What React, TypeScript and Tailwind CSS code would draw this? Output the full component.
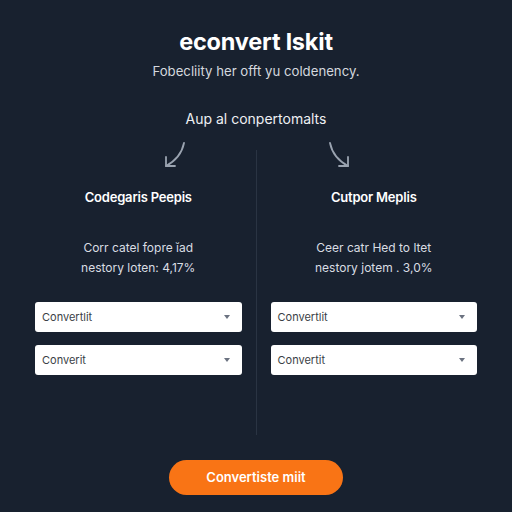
import React from 'react';

const Arrow: React.FC<{ flip?: boolean }> = ({ flip = false }) => (
  <svg
    width="24"
    height="28"
    viewBox="0 0 24 28"
    fill="none"
    className={flip ? '-scale-x-100' : ''}
  >
    <path d="M21 2 C19 12 14 19 3 25" stroke="#9aa3b0" strokeWidth="1.8" strokeLinecap="round" />
    <path d="M3 16 L3 25 L12 25" stroke="#9aa3b0" strokeWidth="1.8" strokeLinecap="round" strokeLinejoin="round" />
  </svg>
);

const Select: React.FC<{ label: string }> = ({ label }) => (
  <div className="h-[30px] bg-white rounded-[3px] flex items-center justify-between pl-[7px] pr-[12px] text-[11px] text-[#3b3f46]">
    <span>{label}</span>
    <span className="w-0 h-0 border-l-[3px] border-r-[3px] border-t-[4px] border-l-transparent border-r-transparent border-t-[#6b7280]" />
  </div>
);

interface ColumnProps {
  heading: string;
  line1: string;
  line2: string;
  arrowOffset: string;
  flip?: boolean;
  selects: string[];
}

const Column: React.FC<ColumnProps> = ({ heading, line1, line2, arrowOffset, flip, selects }) => (
  <div className="flex flex-col">
    <div className={`h-[28px] ${arrowOffset}`}>
      <Arrow flip={flip} />
    </div>
    <h2 className="mt-[19px] text-center text-[13px] leading-[18px] font-semibold text-white tracking-[-0.2px]">
      {heading}
    </h2>
    <div className="mt-[32px] text-center text-[12px] leading-[20px] text-[#d9dde3]">
      <p>{line1}</p>
      <p>{line2}</p>
    </div>
    <div className="mt-[24px] flex flex-col gap-[13px]">
      {selects.map((s, i) => (
        <Select key={i} label={s} />
      ))}
    </div>
  </div>
);

export default function App() {
  return (
    <div
      className="w-full h-[512px] bg-[#18212f] flex flex-col items-center overflow-hidden"
      style={{ fontFamily: 'Inter, "Noto Sans", sans-serif' }}
    >
      <h1 className="mt-[28px] text-[23.5px] leading-[28px] font-bold text-white tracking-[-0.2px]">
        econvert lskit
      </h1>
      <p className="mt-[5px] text-[13.2px] leading-[20px] text-[#d4d8de]">
        Fobecliity her offt yu coldenency.
      </p>
      <p className="mt-[28px] text-[14px] leading-[20px] text-[#eef0f3]">
        Aup al conpertomalts
      </p>

      <div className="mt-[12px] w-full grid grid-cols-[1fr_1px_1fr] gap-x-[14px] px-[35px]">
        <Column
          heading="Codegaris Peepis"
          line1="Corr catel fopre ĭad"
          line2="nestory loten: 4,17%"
          arrowOffset="ml-[128px]"
          selects={['Convertlit', 'Converit']}
        />
        <div className="mt-[9px] h-[285px] bg-[#2a3443]" />
        <Column
          heading="Cutpor Meplis"
          line1="Ceer catr Hed to ltet"
          line2="nestory jotem . 3,0%"
          arrowOffset="ml-[56px]"
          flip
          selects={['Convertlit', 'Convertit']}
        />
      </div>

      <button className="mt-[25px] w-[174px] h-[35px] rounded-full bg-[#f97415] text-white text-[13px] font-semibold">
        Convertiste miit
      </button>
    </div>
  );
}
